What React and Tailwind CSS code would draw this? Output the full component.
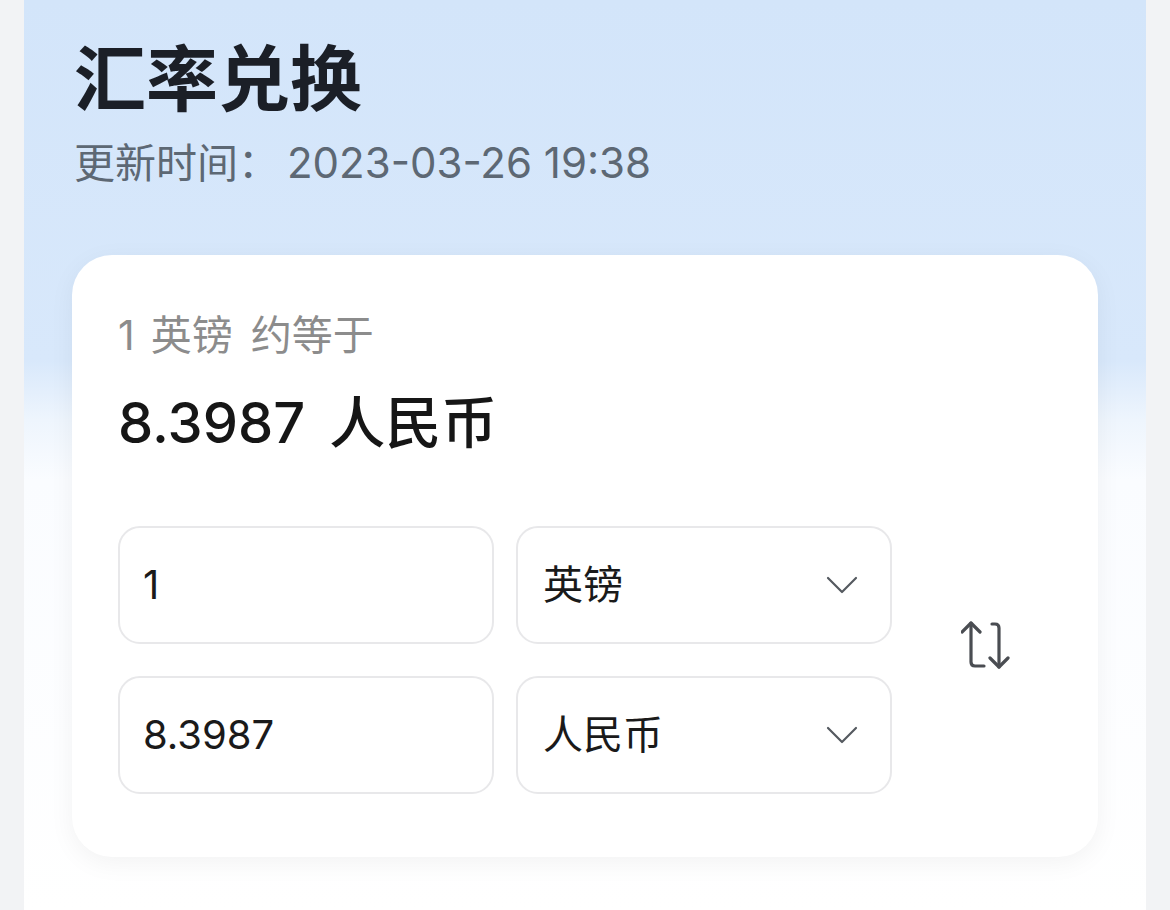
function Chevron() {
  return (
    <svg width="32" height="18" viewBox="0 0 32 18" fill="none" stroke="#555a60" strokeWidth="2.2" strokeLinecap="round" strokeLinejoin="round">
      <path d="M2 2 L16 16 L30 2" />
    </svg>
  );
}

function SwapIcon() {
  return (
    <svg width="50" height="48" viewBox="0 0 50 48" fill="none" stroke="#4a4d52" strokeWidth="3.2" strokeLinecap="round" strokeLinejoin="round">
      <path d="M10 2 V41 Q10 45 14 45 H23" />
      <path d="M1 11 L10 2 L19 11" />
      <path d="M31 3 H34 Q38 3 38 7 V46" />
      <path d="M29 37 L38 46 L47 37" />
    </svg>
  );
}

function Field({ value }) {
  return (
    <div className="flex h-[118px] w-[376px] items-center rounded-[22px] border-2 border-[#e8e8ea] bg-white px-[23px] text-[40px] text-[#1a1a1a]">
      {value}
    </div>
  );
}

function Picker({ label }) {
  return (
    <div className="flex h-[118px] w-[376px] items-center justify-between rounded-[22px] border-2 border-[#e8e8ea] bg-white pl-[25px] pr-[32px] text-[40px] text-[#1a1a1a]">
      <span>{label}</span>
      <Chevron />
    </div>
  );
}

export default function App() {
  return (
    <div className="min-h-[910px] bg-[#f2f3f5] px-[24px] font-['Inter','Noto_Sans_CJK_SC',sans-serif]">
      <div className="h-[910px] bg-[linear-gradient(180deg,#d3e5fa_0px,#d8e8fb_360px,#eef5fd_420px,#fafcff_480px,#ffffff_100%)] px-[48px] pt-[43px]">
        <h1 className="pl-[2px] text-[72px] leading-[72px] font-bold text-[#1b1f27]">汇率兑换</h1>
        <p className="mt-[26px] pl-[2px] text-[41px] leading-[44px] text-[#5d6874]">
          更新时间：
          <span className="ml-[8px] text-[42px]">2023-03-26 19:38</span>
        </p>
        <div className="mt-[70px] rounded-[40px] bg-white px-[46px] pt-[58px] pb-[63px] shadow-[0_6px_26px_rgba(0,0,0,0.05)]">
          <div className="text-[41px] leading-[44px] text-[#8c8c8c]">
            1<span className="ml-[16px]">英镑</span>
            <span className="ml-[18px]">约等于</span>
          </div>
          <div className="mt-[34px] text-[56px] leading-[64px] font-medium text-[#161616]">
            8.3987<span className="ml-[24px]">人民币</span>
          </div>
          <div className="mt-[71px] flex items-center">
            <div className="flex flex-col gap-[32px]">
              <div className="flex gap-[22px]">
                <Field value="1" />
                <Picker label="英镑" />
              </div>
              <div className="flex gap-[22px]">
                <Field value="8.3987" />
                <Picker label="人民币" />
              </div>
            </div>
            <div className="mb-[30px] ml-[69px]">
              <SwapIcon />
            </div>
          </div>
        </div>
      </div>
    </div>
  );
}
